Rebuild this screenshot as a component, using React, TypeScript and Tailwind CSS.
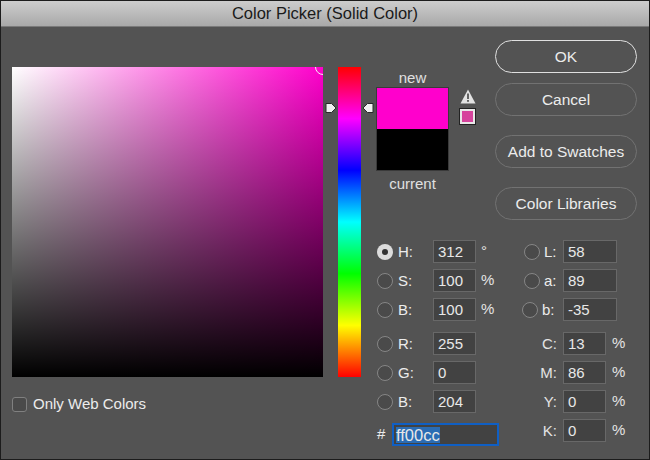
/**
 * Color Picker dialog
 */

function Radio({ checked }: { checked?: boolean }) {
  if (checked) {
    return (
      <span className="w-[16px] h-[16px] shrink-0 rounded-full bg-[#dcdcdc] flex items-center justify-center">
        <span className="w-[6px] h-[6px] rounded-full bg-[#333]" />
      </span>
    );
  }
  return <span className="w-[16px] h-[16px] shrink-0 rounded-full border-[1.5px] border-[#868686] bg-[#4a4a4a]" />;
}

function Field({ value, width }: { value: string; width: string }) {
  return (
    <span className={`${width} h-[23px] shrink-0 flex items-center pl-[4px] bg-[#424242] border border-[#686868] text-[15px] leading-none text-[#e8e8e8]`}>
      {value}
    </span>
  );
}

function HsbRow({ label, value, unit, checked }: { label: string; value: string; unit?: string; checked?: boolean }) {
  return (
    <div className="h-[23px] flex items-center">
      <Radio checked={checked} />
      <span className="w-[40px] pl-[5px] pt-[1px] font-medium text-[#ececec]">{label}</span>
      <Field value={value} width="w-[43px]" />
      <span className="ml-[5px] text-[#e4e4e4]">{unit}</span>
    </div>
  );
}

function LabRow({ label, value, shifted }: { label: string; value: string; shifted?: boolean }) {
  return (
    <div className={`h-[23px] flex items-center ${shifted ? '-ml-[2px]' : ''}`}>
      <Radio />
      <span className={`${shifted ? 'w-[25px]' : 'w-[23px]'} pl-[4px] pt-[1px] font-medium text-[#ececec]`}>{label}</span>
      <Field value={value} width="w-[54px]" />
    </div>
  );
}

function CmykRow({ label, value }: { label: string; value: string }) {
  return (
    <div className="h-[23px] flex items-center">
      <span className="w-[39px] pr-[6px] pt-[1px] text-right font-medium text-[#e4e4e4]">{label}</span>
      <Field value={value} width="w-[43px]" />
      <span className="ml-[6px] text-[#e4e4e4]">%</span>
    </div>
  );
}

function DialogButton({ label, primary }: { label: string; primary?: boolean }) {
  return (
    <button
      className={`w-[142px] h-[33px] rounded-full text-[15.5px] text-[#ececec] ${
        primary ? 'border-[1.5px] border-[#e0e0e0]' : 'border-[1.5px] border-[#727272]'
      }`}
    >
      {label}
    </button>
  );
}

function HueMarker({ direction }: { direction: 'left' | 'right' }) {
  return (
    <svg width="12" height="12" viewBox="0 0 12 12" className="block">
      <path
        d={direction === 'right' ? 'M1 1.5 H6.5 L11 6 L6.5 10.5 H1 Z' : 'M11 1.5 H5.5 L1 6 L5.5 10.5 H11 Z'}
        fill="#f0f0f0"
        stroke="#2a2a2a"
        strokeWidth="1"
        strokeLinejoin="round"
      />
    </svg>
  );
}

export default function App() {
  return (
    <div
      className="w-[650px] h-[460px] overflow-hidden flex flex-col bg-[#535353] border border-[#1c1c1c] text-[15px] text-[#e8e8e8]"
      style={{ fontFamily: '"Liberation Sans", Arial, sans-serif' }}
    >
      {/* Title bar */}
      <div className="h-[26px] shrink-0 flex items-center justify-center bg-linear-to-b from-[#cdcdcd] to-[#a9a9a9] border-b border-[#7a7a7a] text-[16.5px] text-[#1a1a1a]">
        Color Picker (Solid Color)
      </div>

      <div className="flex flex-1">
        {/* Color field */}
        <div className="ml-[11px] pt-[40px] w-[311px] shrink-0">
          <div className="relative w-[311px] h-[310px] bg-linear-to-r/srgb from-white to-[#ff00cc] overflow-hidden">
            <div className="w-full h-full bg-linear-to-t/srgb from-black to-transparent" />
            <span className="absolute -right-[8px] -top-[8px] w-[16px] h-[16px] rounded-full border-[1.5px] border-[#f4f4f4]" />
          </div>
          <label className="mt-[16px] flex items-center gap-[6px] text-[#ececec]">
            <span className="w-[15px] h-[15px] rounded-[3px] border border-[#808080] bg-[#4a4a4a]" />
            Only Web Colors
          </label>
        </div>

        {/* Hue strip */}
        <div className="relative ml-[15px] mt-[40px] w-[23px] h-[310px] shrink-0 bg-[linear-gradient(180deg,#f00,#f0f,#00f,#0ff,#0f0,#ff0,#f00)]">
          <span className="absolute -left-[13px] top-[35px]">
            <HueMarker direction="right" />
          </span>
          <span className="absolute -right-[13px] top-[35px]">
            <HueMarker direction="left" />
          </span>
        </div>

        <div className="ml-[15px] pt-[13px] w-[261px] shrink-0 flex flex-col">
          <div className="h-[200px] flex items-start">
            {/* New / current preview */}
            <div className="w-[73px] pt-[29px] flex flex-col items-center text-[15px] leading-[17px] text-[#e0e0e0]">
              <span>new</span>
              <div className="mt-[1px] w-[73px] h-[84px] flex flex-col border border-[#3a3a3a]">
                <div className="flex-1 bg-[#ff00cc]" />
                <div className="flex-1 bg-black" />
              </div>
              <span className="mt-[4px]">current</span>
            </div>

            {/* Gamut warning */}
            <div className="ml-[11px] pt-[49px] flex flex-col gap-[5px]">
              <svg width="16" height="15" viewBox="0 0 16 15" className="block">
                <path d="M8 0.5 L15.5 14.5 H0.5 Z" fill="#e2e2e2" />
                <rect x="7.2" y="4.5" width="1.6" height="5.5" fill="#444" />
                <rect x="7.2" y="11" width="1.6" height="1.8" fill="#444" />
              </svg>
              <span className="w-[15px] h-[15px] bg-[#d6439c] border-2 border-[#e8e8e8] outline outline-[#222]" />
            </div>

            {/* Action buttons */}
            <div className="ml-auto flex flex-col">
              <DialogButton label="OK" primary />
              <div className="mt-[10px]">
                <DialogButton label="Cancel" />
              </div>
              <div className="mt-[19px]">
                <DialogButton label="Add to Swatches" />
              </div>
              <div className="mt-[19px]">
                <DialogButton label="Color Libraries" />
              </div>
            </div>
          </div>

          {/* Value fields */}
          <div className="flex pl-[1px]">
            <div className="w-[147px] shrink-0 flex flex-col">
              <div className="flex flex-col gap-[6px]">
                <HsbRow label="H:" value="312" unit="°" checked />
                <HsbRow label="S:" value="100" unit="%" />
                <HsbRow label="B:" value="100" unit="%" />
              </div>
              <div className="mt-[11px] flex flex-col gap-[6px]">
                <HsbRow label="R:" value="255" />
                <HsbRow label="G:" value="0" />
                <HsbRow label="B:" value="204" />
              </div>
              <div className="mt-[10px] h-[23px] flex items-center -ml-[1px]">
                <span className="w-[16px] pl-[1px] font-medium text-[#ececec]">#</span>
                <span className="w-[107px] h-[23px] flex items-center pl-[2px] bg-[#424242] border-2 border-[#0f5fc4] text-[16.5px] text-[#e8e8e8]">
                  <span className="bg-[#2a6cb4] leading-[16px]">ff00cc</span>
                </span>
              </div>
            </div>
            <div className="flex flex-col">
              <div className="flex flex-col gap-[6px]">
                <LabRow label="L:" value="58" />
                <LabRow label="a:" value="89" />
                <LabRow label="b:" value="-35" shifted />
              </div>
              <div className="mt-[11px] flex flex-col gap-[6px]">
                <CmykRow label="C:" value="13" />
                <CmykRow label="M:" value="86" />
                <CmykRow label="Y:" value="0" />
                <CmykRow label="K:" value="0" />
              </div>
            </div>
          </div>
        </div>
      </div>
    </div>
  );
}
